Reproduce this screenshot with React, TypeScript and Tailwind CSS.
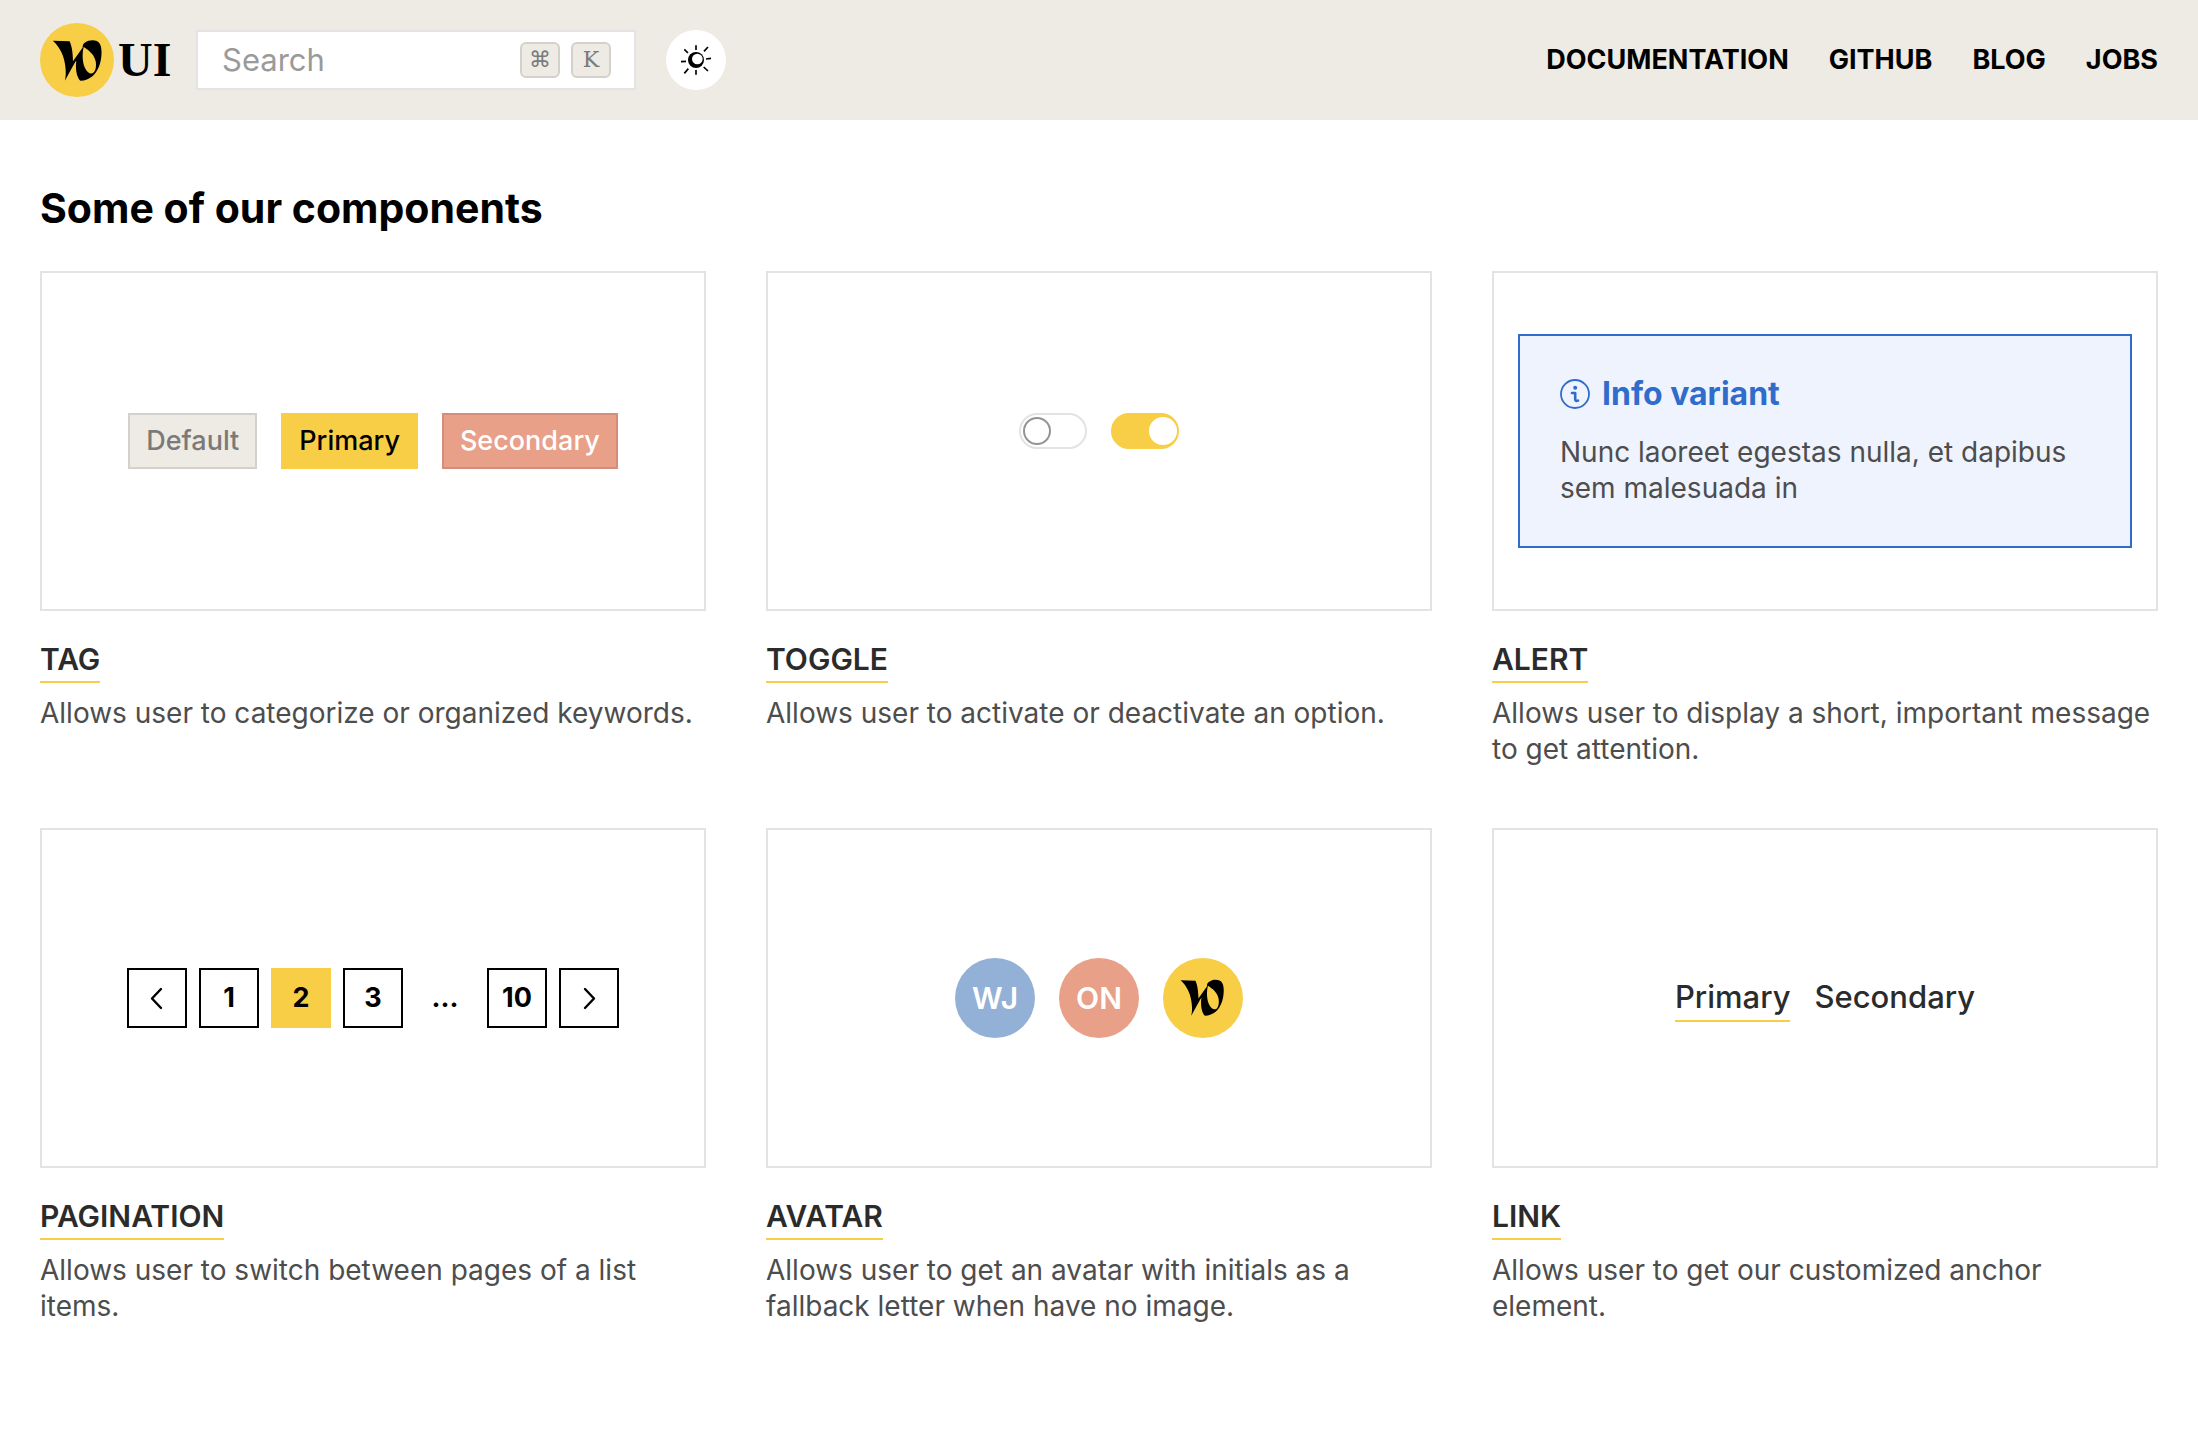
import type { ReactNode } from "react";

const body = "font-['Inter','Open_Sans',sans-serif]";

function WMark({ className, small = false }: { className: string; small?: boolean }) {
  return (
    <svg viewBox="0 0 220 220" className={className} aria-hidden="true">
      <circle cx="110" cy="110" r="110" fill="#f7ce46" />
      <path
        transform={small ? "translate(17 18) scale(.82)" : undefined}
        fillRule="evenodd"
        d="M38 53 L88 54 C94 66 98 88 98 114 L127 73 C126 68 128 62 134 58 C140 53 148 51 156 51 C176 51 183 64 183 86 C183 118 172 144 156 158 C146 166 134 171 120 172 C110 162 106 142 107 122 L108 112 C104 116 101 122 98 128 L74 172 C77 158 77 148 76 136 C74 102 60 72 38 53 Z M130 71 C125 90 126 116 133 132 C138 144 147 151 154 150 C163 148 168 136 166 116 C163 96 148 82 130 71 Z"
      />
    </svg>
  );
}

function SunMoon() {
  return (
    <svg viewBox="0 0 180 180" className="size-full" aria-hidden="true">
      <circle cx="90" cy="90" r="24" />
      <circle cx="94" cy="87" r="16" fill="#fff" />
      <path
        fill="none"
        stroke="#000"
        strokeWidth="5"
        d="M90 46v14M126 51l-12 13M120 87l15-2M113 111l13 12M90 120v14M67 116l-12 14M60 94l-15 1M66 69L55 58"
      />
    </svg>
  );
}

function InfoIcon() {
  return (
    <svg viewBox="0 0 30 30" className="size-[30px]" fill="none" stroke="currentColor" aria-hidden="true">
      <circle cx="15" cy="15" r="14" strokeWidth="1.8" />
      <circle cx="15.2" cy="8.8" r="2" fill="currentColor" stroke="none" />
      <path d="M12 14h3.2v6.2c0 1.6 1.2 2 2.8 1.4" strokeWidth="2.6" strokeLinecap="round" strokeLinejoin="round" />
    </svg>
  );
}

function Chevron({ right = false }: { right?: boolean }) {
  return (
    <svg viewBox="0 0 24 24" className="size-6" fill="none" stroke="currentColor" strokeWidth="2.4" strokeLinecap="round" strokeLinejoin="round" aria-hidden="true">
      <path d={right ? "M8 3l9 9.5L8 22" : "M16 3L7 12.5l9 9.5"} />
    </svg>
  );
}

function Kbd({ children }: { children: ReactNode }) {
  return (
    <kbd className="flex h-9 w-10 items-center justify-center rounded-md border-2 border-[#d4d0cb] bg-[#eeeae4] font-['DejaVu_Serif','DejaVu_Sans',serif] text-[22px] leading-none text-[#7b7a78]">
      {children}
    </kbd>
  );
}

function Card({ title, text, children }: { title: string; text: string; children: ReactNode }) {
  return (
    <article>
      <div className="flex h-[340px] items-center justify-center border-2 border-[#e3e3e3] px-6">{children}</div>
      <h2 className="mt-8 flex">
        <a href="#" className="border-b-2 border-[#f7ce46] pb-1.5 text-[30px] leading-8 font-semibold text-[#2b2b2b]">
          {title}
        </a>
      </h2>
      <p className="mt-3 text-[28px] leading-9 text-[#4d4d4d]">{text}</p>
    </article>
  );
}

const tagBase = "flex h-14 items-center border-2 px-4 text-[27px] font-medium";
const pageBase = "flex size-[60px] items-center justify-center border-2 text-[27px] font-bold";
const toggleBase =
  "relative h-9 w-[68px] appearance-none rounded-full border-2 border-[#e3e3e3] before:absolute before:top-0.5 before:left-0.5 before:size-7 before:rounded-full before:border-2 before:border-[#949494] before:bg-white checked:border-[#f7ce46] checked:bg-[#f7ce46] checked:before:left-9 checked:before:border-white";

export default function App() {
  return (
    <div className={`min-h-screen bg-white text-black ${body}`}>
      <header className="flex h-[120px] items-center bg-[#eeeae4] px-10">
        <a href="#" aria-label="WUI home" className="flex w-[156px] items-center gap-1">
          <WMark className="size-[74px]" />
          <span className="font-['Liberation_Serif',serif] text-[48px] leading-none font-bold">UI</span>
        </a>
        <div className="flex h-[60px] w-[440px] items-center gap-3 border-2 border-[#e3e3e3] bg-white pr-[23px] pl-6">
          <input
            type="text"
            aria-label="Search"
            placeholder="Search"
            className="w-full min-w-0 text-[31px] outline-none placeholder:text-[#9a9a9a]"
          />
          <div className="flex gap-[11px]">
            <Kbd>⌘</Kbd>
            <Kbd>K</Kbd>
          </div>
        </div>
        <button type="button" aria-label="Toggle theme" className="ml-[30px] size-[60px] rounded-full bg-white">
          <SunMoon />
        </button>
        <nav className="ml-auto flex gap-10 text-[27px] font-bold">
          <a href="#">DOCUMENTATION</a>
          <a href="#">GITHUB</a>
          <a href="#">BLOG</a>
          <a href="#">JOBS</a>
        </nav>
      </header>

      <main className="px-10 pt-[58px] pb-16">
        <h1 className="mb-[33px] text-[41px] leading-[60px] font-bold">Some of our components</h1>
        <div className="grid grid-cols-3 gap-x-[60px] gap-y-[61px]">
          <Card title="TAG" text="Allows user to categorize or organized keywords.">
            <div className="flex gap-6">
              <span className={`${tagBase} border-[#d4d0cb] bg-[#eeeae4] text-[#7b7a78]`}>Default</span>
              <span className={`${tagBase} border-[#f7ce46] bg-[#f7ce46]`}>Primary</span>
              <span className={`${tagBase} border-[#d18f7a] bg-[#e8a088] text-white`}>Secondary</span>
            </div>
          </Card>

          <Card title="TOGGLE" text="Allows user to activate or deactivate an option.">
            <div className="flex h-14 gap-6">
              <input type="checkbox" aria-label="Option off" className={toggleBase} />
              <input type="checkbox" aria-label="Option on" defaultChecked className={toggleBase} />
            </div>
          </Card>

          <Card title="ALERT" text="Allows user to display a short, important message to get attention.">
            <div role="alert" className="w-full border-2 border-[#306ccb] bg-[#eef3fe] p-10">
              <div className="flex items-center gap-3 text-[#306ccb]">
                <InfoIcon />
                <strong className="text-[32px] leading-9 font-bold">Info variant</strong>
              </div>
              <p className="mt-[22px] text-[28px] leading-9 text-[#4d4d4d]">
                Nunc laoreet egestas nulla, et dapibus sem malesuada in
              </p>
            </div>
          </Card>

          <Card title="PAGINATION" text="Allows user to switch between pages of a list items.">
            <nav aria-label="Pagination" className="flex gap-3">
              <button type="button" aria-label="Previous page" className={`${pageBase} border-black`}>
                <Chevron />
              </button>
              <button type="button" className={`${pageBase} border-black`}>1</button>
              <button type="button" aria-current="page" className={`${pageBase} border-[#f7ce46] bg-[#f7ce46]`}>2</button>
              <button type="button" className={`${pageBase} border-black`}>3</button>
              <span className={`${pageBase} border-transparent`}>...</span>
              <button type="button" className={`${pageBase} border-black`}>10</button>
              <button type="button" aria-label="Next page" className={`${pageBase} border-black`}>
                <Chevron right />
              </button>
            </nav>
          </Card>

          <Card title="AVATAR" text="Allows user to get an avatar with initials as a fallback letter when have no image.">
            <div className="flex gap-6 text-[30px] font-semibold text-white">
              <span className="flex size-20 items-center justify-center rounded-full bg-[#93b0d7]">WJ</span>
              <span className="flex size-20 items-center justify-center rounded-full bg-[#e8a088]">ON</span>
              <WMark className="size-20" small />
            </div>
          </Card>

          <Card title="LINK" text="Allows user to get our customized anchor element.">
            <div className="flex gap-6 pt-1 text-[31px] leading-[38px] font-medium text-[#2b2b2b]">
              <a href="#" className="border-b-2 border-[#f7ce46] pb-1">Primary</a>
              <a href="#">Secondary</a>
            </div>
          </Card>
        </div>
      </main>
    </div>
  );
}
